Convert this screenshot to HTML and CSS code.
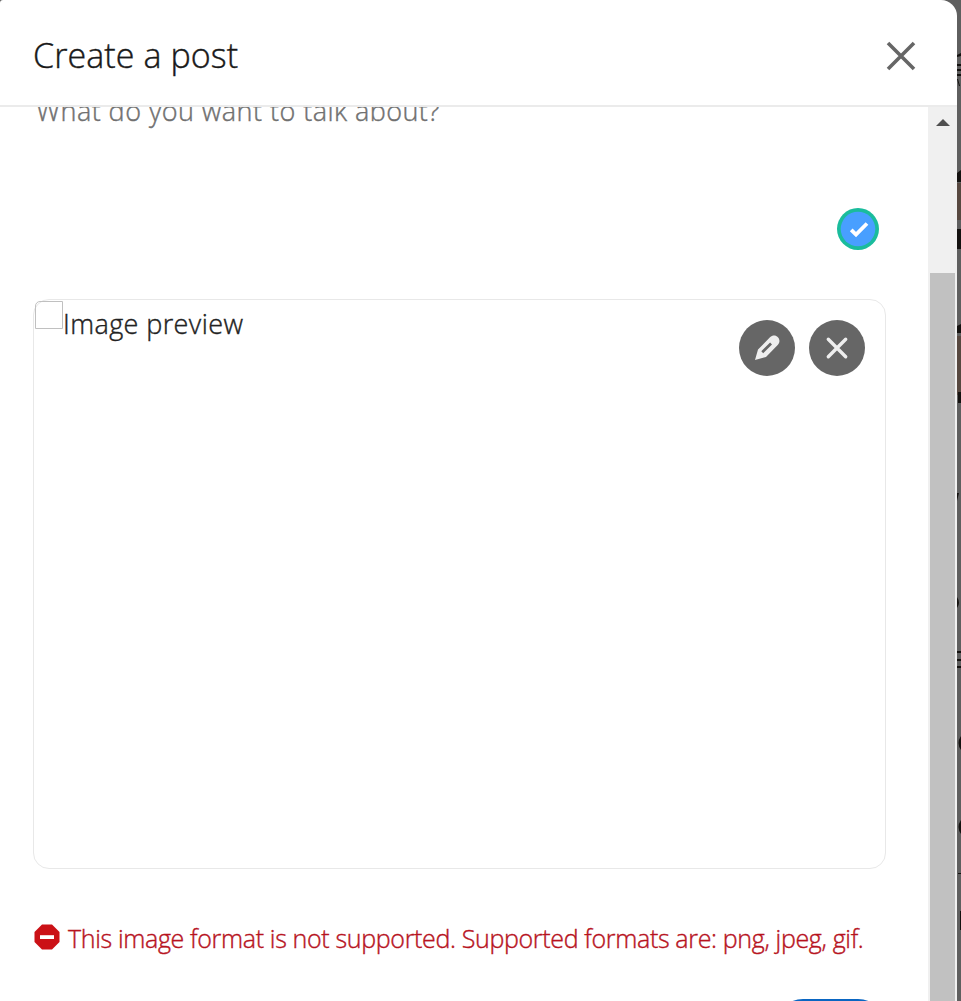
FILE: index.html
```html
<!DOCTYPE html>
<html lang="en">
<head>
<meta charset="utf-8">
<title>Create a post</title>
<link rel="stylesheet" href="styles.css">
</head>
<body>
<div class="page">
  <section class="dialog" role="dialog">
    <header class="header">
      <h1 class="title"><span>Create a post</span></h1>
      <svg class="close" viewBox="0 0 30 30"><path d="M2 2 28 28M28 2 2 28"/></svg>
    </header>
    <div class="body">
      <main class="content">
        <div class="prompt"><span>What do you want to talk about?</span></div>
        <div class="status">
          <svg class="badge" viewBox="0 0 42 42"><circle class="ring" cx="21" cy="21" r="21"/><circle class="disc" cx="21" cy="21" r="17.3"/><path d="M14.2 21.8 19 26.5 30 15.5"/></svg>
        </div>
        <div class="preview">
          <div class="missing"></div>
          <div class="alt"><span>Image preview</span></div>
          <div class="actions">
            <svg class="round" viewBox="0 0 56 56"><circle cx="28" cy="28" r="28"/><path class="pencil" fill-rule="evenodd" d="M16 40 19 29.5 31 17.3C33.8 14.7 37 15.4 38.9 17.2C40.8 19.2 41.2 22.2 38.7 25L27 37ZM22.3 31.3 24.2 33.2 33 24.4 31.1 22.5Z"/></svg>
            <svg class="round" viewBox="0 0 56 56"><circle cx="28" cy="28" r="28"/><path class="cross" d="M19.3 19.3 36.7 36.7M36.7 19.3 19.3 36.7"/></svg>
          </div>
        </div>
        <div class="error">
          <svg class="stop" viewBox="0 0 26 26"><path class="octagon" d="M8 .5H18L25.5 8V18L18 25.5H8L.5 18V8Z"/><path class="bar" d="M6 11.2H20V15H6Z"/></svg>
          <span class="message">This image format is not supported. Supported formats are: png, jpeg, gif.</span>
        </div>
        <div class="footer"><div class="done"></div></div>
      </main>
      <div class="scrollbar">
        <svg class="arrow" viewBox="0 0 14 7"><path d="M0 7 7 0 14 7Z"/></svg>
        <div class="thumb"></div>
      </div>
    </div>
  </section>
  <svg class="backdrop" viewBox="0 0 4 1001">
    <path class="skin" d="M0 183H4V220H0ZM0 336H4V395H0Z"/>
    <path class="ink" d="M0 173 4 170V182H0ZM0 229H4V249H0ZM0 326 4 324V333H0ZM1 392H4V403H1ZM0 493H2L0 501ZM0 597Q4 603 0 608ZM0 651H4V653H0ZM0 659H4V661H0ZM0 666H4V668H0ZM4 736Q-1 743 4 750ZM4 820Q-1 827 4 834ZM1 873H4V874H1ZM3 911H4V930H3ZM0 55 4 53V56L0 57ZM0 64H4V66H0ZM0 69H4V71H0ZM0 74H4V76H0ZM0 79 1 79 3 86H2Z"/>
  </svg>
</div>
</body>
</html>
```
FILE: styles.css
```css
* { box-sizing: border-box; }
body { margin: 0; background: #606060; font-family: "Open Sans", "Noto Sans", sans-serif; font-weight: 300; -webkit-text-stroke: 0.4px currentColor; }
svg { display: block; fill: none; flex: none; }
.page { display: flex; width: 961px; height: 1001px; overflow: hidden; background: #5f5f5f; }
.dialog { display: flex; flex-direction: column; width: 957px; height: 1001px; background: #fff; border-radius: 3px 16px 0 0; overflow: hidden; }
.header { display: flex; justify-content: space-between; align-items: center; height: 107px; padding: 5px 41px 0 33px; border-bottom: 2px solid #ebebeb; flex: none; }
.title { margin: 0; font-size: 34px; line-height: 48px; font-weight: 300; letter-spacing: 0.08px; color: #191919; white-space: nowrap; }
.close { width: 30px; height: 30px; stroke: #666; stroke-width: 3.6; margin-top: 2px; }
.body { display: flex; flex: 1; min-height: 0; }
.content { width: 928px; padding: 0 42px 0 33px; overflow: hidden; }
.prompt { height: 101px; padding-left: 3px; color: #707070; font-size: 27px; line-height: 36px; letter-spacing: 0.45px; white-space: nowrap; overflow: hidden; }
.prompt span { display: block; margin-top: -14px; }
.status { display: flex; justify-content: flex-end; padding-right: 7px; height: 91px; }
.badge { width: 42px; height: 42px; }
.ring { fill: #1abc9c; }
.disc { fill: #489fff; }
.badge path { stroke: #fff; stroke-width: 3.8; }
.preview { display: flex; height: 570px; border: 1px solid #e8e8e8; border-radius: 16px; padding: 1px 20px 0 1px; }
.missing { width: 28px; height: 28px; border: 1px solid #c0c0c0; border-top-left-radius: 5px; }
.alt { padding-top: 5px; font-size: 27px; line-height: 36px; letter-spacing: 0.4px; color: #222; white-space: nowrap; }
.actions { display: flex; gap: 14px; margin-left: auto; padding-top: 19px; }
.round { width: 56px; height: 56px; fill: #666; }
.pencil { fill: #eee; }
.cross { stroke: #eee; stroke-width: 3.4; stroke-linecap: round; }
.error { display: flex; align-items: center; height: 36px; margin-top: 50px; padding-left: 1px; gap: 8px; color: #b7131e; font-size: 25px; white-space: nowrap; }
.stop { width: 26px; height: 26px; }
.octagon { fill: #cb1116; }
.bar { fill: #fff; }
.message { line-height: 36px; padding-top: 1px; letter-spacing: -0.34px; }
.footer { display: flex; justify-content: flex-end; padding: 44px 0 0 0; }
.done { width: 111px; height: 56px; border-radius: 28px; background: #0a66c2; }
.scrollbar { width: 29px; background: #f0f0f0; padding: 12px 2px 0; }
.arrow { width: 14px; height: 7px; margin: 0 auto; fill: #505050; }
.thumb { height: 750px; margin-top: 147px; background: #c1c1c1; }
.backdrop { width: 4px; height: 1001px; }
.ink { fill: #141210; }
.skin { fill: #574840; }
```
